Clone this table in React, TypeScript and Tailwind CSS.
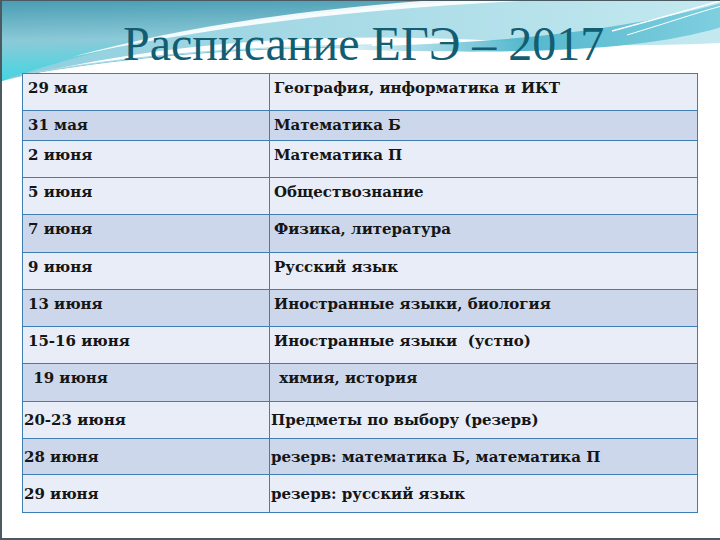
import React from "react";

type Row = {
  date: string;
  subject: string;
  h: string;
  dark?: boolean;
  low?: boolean;
};

const rows: Row[] = [
  { date: "29 мая", subject: "География, информатика и ИКТ", h: "h-[37px]" },
  { date: "31 мая", subject: "Математика Б", h: "h-[30px]", dark: true },
  { date: "2 июня", subject: "Математика П", h: "h-[37px]" },
  { date: "5 июня", subject: "Обществознание", h: "h-[37px]" },
  { date: "7 июня", subject: "Физика, литература", h: "h-[38px]", dark: true },
  { date: "9 июня", subject: "Русский язык", h: "h-[37px]" },
  { date: "13 июня", subject: "Иностранные языки, биология", h: "h-[37px]", dark: true },
  { date: "15-16 июня", subject: "Иностранные языки  (устно)", h: "h-[37px]" },
  { date: " 19 июня", subject: " химия, история", h: "h-[38px]", dark: true },
  { date: "20-23 июня", subject: "Предметы по выбору (резерв)", h: "h-[37px]", low: true },
  { date: "28 июня", subject: "резерв: математика Б, математика П", h: "h-[36px]", dark: true, low: true },
  { date: "29 июня", subject: "резерв: русский язык", h: "h-[38px]", low: true },
];

function Waves() {
  return (
    <svg
      width="720"
      height="110"
      viewBox="0 0 720 110"
      className="pointer-events-none absolute left-0 top-0"
    >
      <defs>
        <linearGradient id="teal" x1="0" y1="0" x2="0.1" y2="1">
          <stop offset="0" stopColor="#4a9db4" />
          <stop offset="0.5" stopColor="#8ccad8" />
          <stop offset="1" stopColor="#3fd6e2" />
        </linearGradient>
        <linearGradient id="right" x1="0" y1="0" x2="1" y2="0">
          <stop offset="0" stopColor="#8fcedd" />
          <stop offset="1" stopColor="#c4e9f0" />
        </linearGradient>
        <linearGradient id="ribbon" x1="0" y1="0" x2="1" y2="0">
          <stop offset="0" stopColor="#7cc9d9" stopOpacity="0" />
          <stop offset="0.55" stopColor="#55b8cd" />
          <stop offset="1" stopColor="#7fcfdf" />
        </linearGradient>
      </defs>
      <path d="M0 0 H720 V42 C 640 46 580 44 500 40 C 320 30 160 40 0 80 Z" fill="url(#right)" />
      <path d="M0 0 H460 C 300 10 140 30 0 80 Z" fill="url(#teal)" />
      <path
        d="M70 56 C 200 26 360 8 520 0 L 420 0 C 290 10 180 26 70 56 Z"
        fill="#ffffff"
        opacity="0.9"
      />
      <path
        d="M280 46 C 450 46 600 36 720 2 L720 26 C 640 50 520 56 280 46 Z"
        fill="url(#ribbon)"
      />
      <path d="M8 76 C 120 56 220 48 340 46" stroke="#7fc4d4" strokeWidth="1" fill="none" />
      <path d="M18 74 C 130 54 230 46 370 44" stroke="#a9dbe5" strokeWidth="1" fill="none" />
      <path d="M610 30 C 655 18 690 8 718 0" stroke="#ffffff" strokeWidth="1.5" fill="none" />
      <path d="M625 34 C 665 22 700 10 720 5" stroke="#ffffff" strokeWidth="1" fill="none" />
    </svg>
  );
}

export default function App() {
  return (
    <div className="relative h-[540px] w-[720px] overflow-hidden border-b-2 border-l-2 border-t border-[#4b5a60] bg-white">
      <Waves />
      <div className="relative flex flex-col">
        <h1
          className="h-[72px] pl-[121px] pt-[19px] text-[48px] leading-[48px] text-[#125d72]"
          style={{ fontFamily: '"Liberation Serif", serif' }}
        >
          Расписание ЕГЭ – 2017
        </h1>
        <table
          className="ml-[20px] w-[676px] border-collapse text-[15px] font-bold text-[#151515]"
          style={{ fontFamily: '"DejaVu Serif", serif' }}
        >
          <colgroup>
            <col className="w-[247px]" />
            <col />
          </colgroup>
          <tbody>
            {rows.map((r) => (
              <tr key={r.date} className={`${r.h} ${r.dark ? "bg-[#cdd7eb]" : "bg-[#e8edf7]"}`}>
                <td
                  className={`whitespace-pre border border-[#3f7db2] p-0 leading-[20px] ${
                    r.low ? "pl-[1px] align-middle" : "pl-[5px] pt-[4px] align-top"
                  }`}
                >
                  {r.date}
                </td>
                <td
                  className={`whitespace-pre border border-[#3f7db2] p-0 leading-[20px] ${
                    r.low ? "pl-[1px] align-middle" : "pl-[4px] pt-[4px] align-top"
                  }`}
                >
                  {r.subject}
                </td>
              </tr>
            ))}
          </tbody>
        </table>
      </div>
    </div>
  );
}
